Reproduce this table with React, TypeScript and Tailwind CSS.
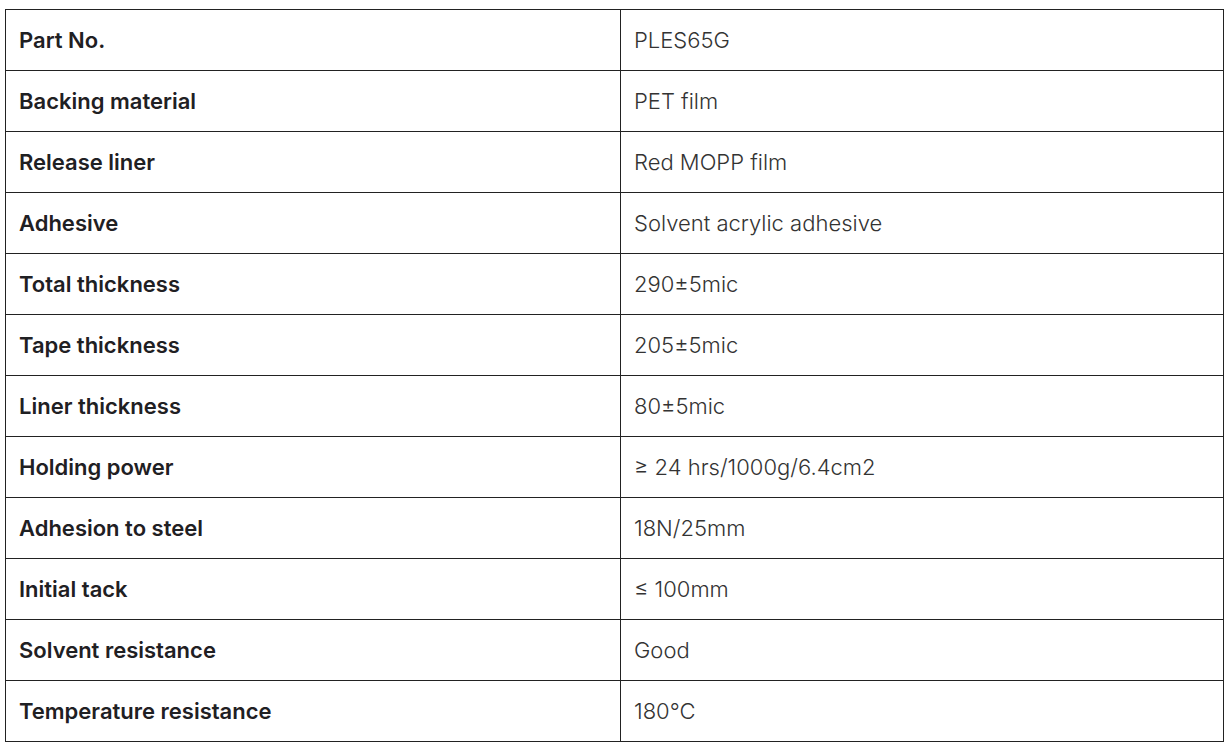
const rows: [string, string][] = [
  ['Part No.', 'PLES65G'],
  ['Backing material', 'PET film'],
  ['Release liner', 'Red MOPP film'],
  ['Adhesive', 'Solvent acrylic adhesive'],
  ['Total thickness', '290±5mic'],
  ['Tape thickness', '205±5mic'],
  ['Liner thickness', '80±5mic'],
  ['Holding power', '≥ 24 hrs/1000g/6.4cm2'],
  ['Adhesion to steel', '18N/25mm'],
  ['Initial tack', '≤ 100mm'],
  ['Solvent resistance', 'Good'],
  ['Temperature resistance', '180°C'],
];

export default function App() {
  return (
    <div className="bg-white pl-[5px] pt-[9px] font-['Inter',sans-serif]">
      <table className="w-[1219px] table-fixed border-collapse border border-[#222]">
        <colgroup>
          <col className="w-[615px]" />
          <col />
        </colgroup>
        <tbody>
          {rows.map(([label, value]) => (
            <tr key={label} className="h-[61px] border-b border-[#222]">
              <td className="border-r border-[#222] px-[13px] text-[22px] font-semibold text-[#1f2023]">
                {label}
              </td>
              <td className="px-[13px] text-[22px] font-light text-[#333]">{value}</td>
            </tr>
          ))}
        </tbody>
      </table>
    </div>
  );
}
